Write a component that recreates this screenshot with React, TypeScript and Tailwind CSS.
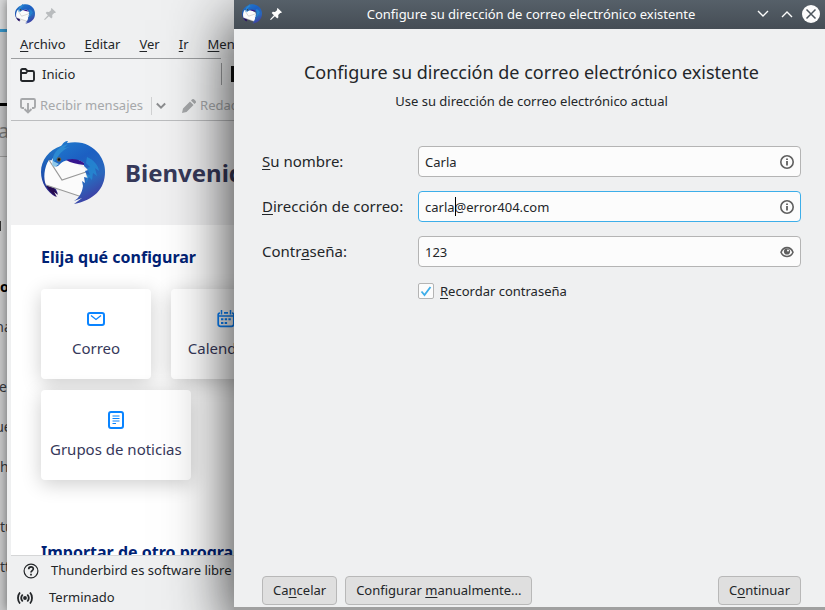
import React, { useId } from "react";
import type { ReactNode } from "react";

function ThunderbirdLogo({ className }: { className: string }) {
  const id = useId();
  const body = `${id}-body`;
  const wing = `${id}-wing`;
  return (
    <svg viewBox="0 0 64 64" className={className} aria-hidden="true">
      <defs>
        <linearGradient id={body} x1="0.2" y1="0" x2="0.7" y2="1">
          <stop offset="0" stopColor="#1f78cc" />
          <stop offset="0.35" stopColor="#1c5fc2" />
          <stop offset="0.7" stopColor="#2a68bd" />
          <stop offset="1" stopColor="#4238a0" />
        </linearGradient>
        <linearGradient id={wing} x1="0.4" y1="0" x2="0.4" y2="1">
          <stop offset="0" stopColor="#2176c8" />
          <stop offset="0.6" stopColor="#1c4fae" />
          <stop offset="1" stopColor="#2f1575" />
        </linearGradient>
      </defs>
      <path d="M20 5C8 9 0 19 0 31c0 11 6 20 15 25l-3-6 5 3-6-14L10 20z" fill={`url(#${wing})`} />
      <path d="M5 44c2 5 6 9 11 12l-3-5 4 3-4-7 7 3z" fill="#260a50" />
      <path d="M8 19l10 2 12-1 14 8 1 14-4 15L5 44C2 38 3 26 8 19z" fill="#fbfbfb" />
      <path d="M8 19l13 20 24-8M5 44l36 12" fill="none" stroke="#999" strokeWidth="1.2" />
      <path
        d="M12 24c-1-9 2-15 9-20 1-2 3-4 6-4l-1 2c14-3 25 2 32 11 4 6 6 11 6 18 0 17-11 28-31 32l8-6-8 3c5-3 8-8 9-15l-1-5 3 2-1-6 4 1-3-7 3-1-4-4v-3c-3-3-9-4-16-3-5 1-7 3-10 6-2 1-3 0-5-1z"
        fill={`url(#${body})`}
      />
      <path d="M25 19c6-2 13-1 18 3v2c-7-1-13-2-18-5z" fill="#35158f" />
      <path d="M46 16c7 3 11 8 12 14l-4-3 2 8-4-3-1 7-3-3-3 6 1-6-1-3 4 1-3-7 3-1-4-4z" fill="#2596d8" opacity="0.6" />
      <path d="M21 5c-7 5-10 10-9 17l4-5c3-5 7-9 13-11l-6 1 4-4z" fill="#2c8ad2" />
      <path d="M12 20l-1 4 3 2 4-3z" fill="#8fc8e8" />
      <circle cx="18" cy="18.500" r="2.200" fill="#6a6040" />
      <circle cx="18" cy="18.500" r="1.200" fill="#0b0b14" />
    </svg>
  );
}

function Pin({ className }: { className: string }) {
  return (
    <svg viewBox="0 0 12 12" className={className} fill="currentColor" aria-hidden="true">
      <path d="M7.600 0L12 4.200l-1 .9-.8-.2-2 2.200.2 2.200-1.100 1.100L4.900 8.200 1.200 11.700.2 11.900.4 10.900 3.900 7.200 1.700 4.900l1.100-1.100 2.200.1 2.200-2L6.900 1z" />
    </svg>
  );
}

function Chevron({ className, up = false, width = 1.4 }: { className: string; up?: boolean; width?: number }) {
  return (
    <svg viewBox="0 0 12 8" className={className} fill="none" stroke="currentColor" strokeWidth={width} aria-hidden="true">
      <path d={up ? "M1 7l5-5 5 5" : "M1 1l5 5 5-5"} />
    </svg>
  );
}

function InfoIcon() {
  return (
    <svg viewBox="0 0 14 14" className="size-3.5" fill="none" stroke="#5f5f5f" aria-hidden="true">
      <circle cx="7" cy="7" r="6.200" strokeWidth="1.600" />
      <path d="M7 6v4.500M7 3.500v1.500" strokeWidth="1.800" />
    </svg>
  );
}

function EyeIcon() {
  return (
    <svg viewBox="0 0 14 12" className="h-3 w-3.5" aria-hidden="true">
      <path d="M1 6.200C3.500 .1 10.500 .1 13 6.200 10.500 11.900 3.500 11.900 1 6.200z" fill="#fcfcfc" stroke="#5f5f5f" strokeWidth="1.600" />
      <circle cx="7" cy="5.500" r="3.100" fill="#5f5f5f" />
      <circle cx="8" cy="4.600" r="1" fill="#fcfcfc" />
    </svg>
  );
}

const backdropLines = [
  { text: "o", style: "mb-5 font-bold text-black" },
  { text: "na", style: "mb-10 justify-center" },
  { text: "e", style: "mb-5 justify-end" },
  { text: "ue", style: "mb-5 justify-center" },
  { text: "h", style: "mb-10" },
  { text: "tu", style: "mb-5" },
  { text: "tt", style: "" },
];

function Backdrop() {
  return (
    <div className="flex h-full w-[7px] flex-col overflow-hidden bg-[#c9cacb] text-sm leading-5 text-[#35383b]">
      <div className="h-[29px] shrink-0 bg-[#d9dadb]" />
      <div className="h-[3px] shrink-0 bg-[#3594c8]" />
      <div className="h-[71px] shrink-0" />
      <div className="h-[3px] shrink-0 bg-black" />
      <div className="flex h-[51px] shrink-0 items-center justify-center border-b border-[#999] bg-[#c2c3c4] text-xl text-[#777]">
        a
      </div>
      <div className="mt-16 mb-[46px] h-[10px] w-px shrink-0 bg-[#333]" />
      {backdropLines.map((line) => (
        <div key={line.text} className={`flex shrink-0 ${line.style}`}>
          {line.text}
        </div>
      ))}
    </div>
  );
}

const menus = ["Archivo", "Editar", "Ver", "Ir", "Mensaje"];

function SetupCard({ label, children }: { label: string; children: ReactNode }) {
  return (
    <button className="flex h-[90px] min-w-[110px] flex-col items-center gap-2 rounded bg-white px-[9px] pt-[21px] text-[15px] leading-6 text-[#36385a] shadow-[0_4px_20px_rgba(0,0,0,0.2)]">
      {children}
      {label}
    </button>
  );
}

function MailWindow() {
  return (
    <section className="flex h-full flex-col overflow-hidden border-x-4 border-[#eff0f1] bg-[#eff0f1] whitespace-nowrap">
      <header className="flex h-[29px] shrink-0 items-center gap-[9px] pb-px pl-1">
        <ThunderbirdLogo className="size-5" />
        <Pin className="size-3 text-[#b9bcbe]" />
      </header>
      <nav className="flex h-[29px] shrink-0 items-center gap-[19px] pl-[9px]">
        {menus.map((menu) => (
          <button key={menu} className="leading-5 first-letter:underline first-letter:underline-offset-2">
            {menu}
          </button>
        ))}
      </nav>
      <div className="flex h-8 shrink-0 bg-[#f1f2f3]">
        <div className="flex w-[210px] items-center gap-[7px] border-t border-[#9c9ea0] pl-[9px]">
          <svg viewBox="0 0 15 14" className="h-3.5 w-[15px]" fill="none" stroke="#232629" strokeWidth="1.900" aria-hidden="true">
            <path d="M1 11.500v-9C1 1.500 1.500 1 2.500 1h3l2 2h5c1 0 1.500.5 1.500 1.500v7c0 1-.5 1.500-1.500 1.500h-10C1.500 13 1 12.500 1 11.500zM1 5h5l1.500-2" />
          </svg>
          Inicio
        </div>
        <div className="my-[5px] w-px bg-[#9c9ea0]" />
        <div className="mt-2 ml-[9px] h-4 w-10 bg-[#111]" />
      </div>
      <div className="flex h-[31px] shrink-0 items-center border-b border-[#bcbdbf] bg-[#f1f2f3] pt-px pl-[9px] text-[#a6a8aa]">
        <button className="flex items-center gap-1">
          <svg viewBox="0 0 16 16" className="size-4" fill="none" stroke="currentColor" strokeWidth="1.900" aria-hidden="true">
            <path d="M4 10H2.200C1.400 10 1 9.600 1 8.800V2.200C1 1.400 1.400 1 2.200 1h11.600c.8 0 1.200.4 1.200 1.200v6.600c0 .8-.4 1.200-1.200 1.200H12M8 5v9.500M4.500 11L8 14.500 11.500 11" />
          </svg>
          Recibir mensajes
        </button>
        <span className="mr-1 ml-2 h-[18px] w-px bg-[#d0d1d2]" />
        <Chevron className="h-2 w-[10px] text-[#8b8d8f]" width={2.4} />
        <button className="ml-4 flex items-center gap-1">
          <svg viewBox="0 0 14 14" className="size-3.5" fill="currentColor" aria-hidden="true">
            <path d="M0 14l1-4.500L8 2.500 11.500 6l-7 7zM9 1.500l1-1c.7-.7 1.500-.7 2.200 0l1.300 1.300c.7.7.7 1.500 0 2.200l-1 1z" />
          </svg>
          Redactar
        </button>
      </div>
      <div className="flex h-[104px] shrink-0 items-center gap-5 bg-[#f1f1f2] pl-[30px]">
        <ThunderbirdLogo className="size-16" />
        <h1 className="text-2xl font-bold text-[#363959]">Bienvenido a Thunderbird</h1>
      </div>
      <main className="min-h-0 flex-1 overflow-hidden bg-white pt-5 pl-[30px]">
        <h2 className="text-base leading-6 font-bold text-[#002275]">Elija qué configurar</h2>
        <div className="mt-5 flex gap-5">
          <SetupCard label="Correo">
            <svg viewBox="0 0 18 18" className="size-[18px]" fill="none" stroke="#0a84ff" aria-hidden="true">
              <rect x="1" y="3" width="16" height="12" rx="2" strokeWidth="2" />
              <path d="M4 5.500l5 4 5-4" strokeWidth="1.300" />
            </svg>
          </SetupCard>
          <SetupCard label="Calendario">
            <svg viewBox="0 0 18 18" className="size-[18px]" fill="none" stroke="#0a84ff" aria-hidden="true">
              <path d="M3 3C1.700 3 1.200 3.500 1.200 5v9c0 1.600.7 2.300 2.300 2.300h11c1.600 0 2.300-.7 2.300-2.300V5c0-1.500-.5-2-1.800-2M7 2.800h4M1.500 6h15" strokeWidth="1.700" />
              <path d="M4.500 0v4.500M13.500 0v4.500" strokeWidth="1.500" />
              <path d="M4 9.300h10M4 13h6.500" strokeWidth="2" strokeDasharray="2.400 1.300" />
            </svg>
          </SetupCard>
        </div>
        <div className="mt-[11px] flex">
          <SetupCard label="Grupos de noticias">
            <svg viewBox="0 0 18 18" className="size-[18px]" fill="none" stroke="#0a84ff" aria-hidden="true">
              <rect x="2" y="1" width="14" height="16" rx="2" strokeWidth="2" />
              <path d="M5.500 5h7M5.500 7.500h7M5.500 10h7M5.500 12.500h3.500" strokeWidth="1.200" />
            </svg>
          </SetupCard>
        </div>
        <h2 className="mt-[60px] text-base leading-6 font-bold text-[#002275]">Importar de otro programa</h2>
      </main>
      <footer className="shrink-0 border-t border-[#d5d6d7]">
        <div className="flex h-[30px] items-center gap-3 pl-3">
          <svg viewBox="0 0 16 16" className="size-4" fill="none" stroke="#232629" aria-hidden="true">
            <circle cx="8" cy="8" r="6.900" strokeWidth="1.200" />
            <path d="M5.700 6.300C5.700 3 10.500 3.200 10.300 6 10.200 7.500 8 7.700 8 9.500" strokeWidth="1.700" />
            <path d="M8 10.700v1.800" strokeWidth="1.700" />
          </svg>
          Thunderbird es software libre y de código abierto
        </div>
        <div className="flex h-6 items-center gap-4 pl-[6px]">
          <svg viewBox="0 0 16 12" className="h-3 w-4" fill="none" stroke="#232629" strokeWidth="1.800" aria-hidden="true">
            <circle cx="8" cy="6" r="1" fill="#232629" />
            <path d="M3 .5C.3 3.500.3 8.500 3 11.500M5.700 2.500c-1.700 2-1.700 5 0 7M13 .5c2.700 3 2.700 8 0 11M10.300 2.500c1.700 2 1.700 5 0 7" />
          </svg>
          Terminado
        </div>
      </footer>
    </section>
  );
}

interface FieldProps {
  id: string;
  label: ReactNode;
  value: string;
  focused?: boolean;
  children: ReactNode;
}

function Field({ id, label, value, focused = false, children }: FieldProps) {
  return (
    <>
      <label htmlFor={id} className="pb-[2px] text-[15px] leading-6 whitespace-nowrap">
        {label}
      </label>
      <div
        className={`relative flex h-[31px] items-center rounded-sm border bg-[#fcfcfc] pr-[6px] ${
          focused ? "border-[#3daee9]" : "border-[#b4b4b4]"
        }`}
      >
        <input id={id} type="text" defaultValue={value} className="h-full min-w-0 flex-1 bg-transparent pl-[6px] outline-none" />
        {focused && <span className="absolute top-[5px] left-9 h-[19px] w-px bg-black" />}
        {children}
      </div>
    </>
  );
}

function DialogButton({ children }: { children: ReactNode }) {
  return (
    <button className="h-[29px] rounded-sm border border-[#b8b8b8] bg-[#dfdfdf] px-[10px] whitespace-nowrap">
      {children}
    </button>
  );
}

function SetupDialog() {
  return (
    <section className="flex h-full flex-col border-b-[3px] border-[#a0a0a0] bg-[#eff0f1]">
      <header className="flex h-[29px] shrink-0 items-center bg-linear-to-b from-[#566069] to-[#454d55] pr-[5px] pb-px pl-2 text-[#fcfcfc]">
        <div className="flex w-16 items-center gap-2">
          <ThunderbirdLogo className="size-5" />
          <Pin className="size-3" />
        </div>
        <h2 className="flex-1 text-center leading-5 whitespace-nowrap">Configure su dirección de correo electrónico existente</h2>
        <div className="flex w-16 items-center justify-end gap-[9px]">
          <div className="flex items-center gap-3">
            <button aria-label="Minimizar">
              <Chevron className="h-2 w-3" />
            </button>
            <button aria-label="Maximizar">
              <Chevron className="h-2 w-3" up />
            </button>
          </div>
          <button aria-label="Cerrar">
            <svg viewBox="0 0 18 18" className="size-[18px]" aria-hidden="true">
              <circle cx="9" cy="9" r="9" fill="#fcfcfc" />
              <path d="M4.500 4.500l9 9M13.500 4.500l-9 9" stroke="#4b545c" strokeWidth="1.500" />
            </svg>
          </button>
        </div>
      </header>
      <form className="flex min-h-0 flex-1 flex-col pr-6 pb-[2px] pl-7" onSubmit={(event) => event.preventDefault()}>
        <h1 className="mt-[31px] text-center text-lg leading-6 whitespace-nowrap">Configure su dirección de correo electrónico existente</h1>
        <p className="mt-[7px] text-center leading-5">Use su dirección de correo electrónico actual</p>
        <div className="mt-[35px] grid grid-cols-[156px_1fr] items-center gap-y-[14px]">
          <Field id="name" value="Carla" label={<><u className="underline-offset-2">S</u>u nombre:</>}>
            <InfoIcon />
          </Field>
          <Field id="email" value="carla@error404.com" focused label={<><u className="underline-offset-2">D</u>irección de correo:</>}>
            <InfoIcon />
          </Field>
          <Field id="password" value="123" label={<>Contr<u className="underline-offset-2">a</u>seña:</>}>
            <EyeIcon />
          </Field>
          <div className="col-start-2 flex items-center gap-[6px]">
            <span className="relative flex size-4">
              <input
                id="remember"
                type="checkbox"
                defaultChecked
                className="peer size-4 appearance-none rounded-xs border border-[#b4b4b4] bg-[#fcfcfc]"
              />
              <svg viewBox="0 0 16 16" className="pointer-events-none absolute inset-0 hidden size-4 peer-checked:block" fill="none" stroke="#3daee9" strokeWidth="1.800" aria-hidden="true">
                <path d="M3.500 8.500l3 3.500 6-8" />
              </svg>
            </span>
            <label htmlFor="remember" className="leading-5">
              <u className="underline-offset-2">R</u>ecordar contraseña
            </label>
          </div>
        </div>
        <div className="mt-auto flex gap-2">
          <DialogButton>Ca<u className="underline-offset-2">n</u>celar</DialogButton>
          <DialogButton>Configurar <u className="underline-offset-2">m</u>anualmente...</DialogButton>
          <div className="ml-auto flex">
            <DialogButton>C<u className="underline-offset-2">o</u>ntinuar</DialogButton>
          </div>
        </div>
      </form>
    </section>
  );
}

export default function App() {
  return (
    <div className="relative h-screen w-full overflow-hidden bg-[#c9cacb] font-['Noto_Sans',sans-serif] text-[13px] text-[#232629]">
      <Backdrop />
      <div className="absolute inset-y-0 right-0 left-[7px] shadow-[0_0_10px_rgba(0,0,0,0.5)]">
        <MailWindow />
      </div>
      <div className="absolute inset-y-0 right-0 left-[234px] shadow-[0_20px_60px_rgba(0,0,0,0.85)]">
        <SetupDialog />
      </div>
    </div>
  );
}
